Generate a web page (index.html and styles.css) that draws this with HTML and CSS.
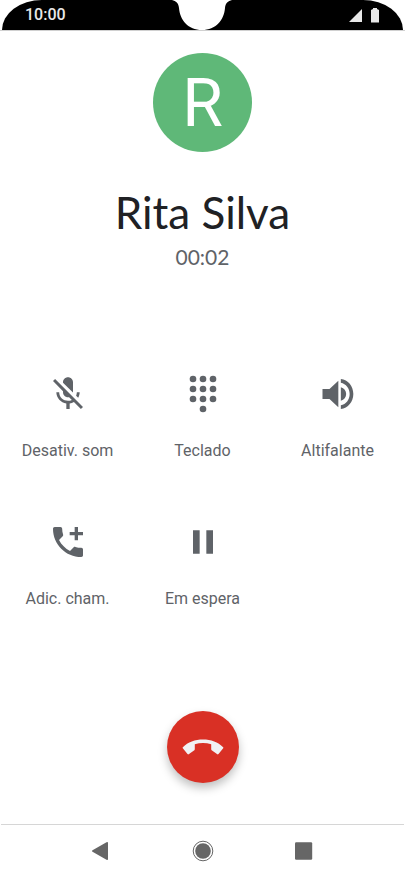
FILE: index.html
```html
<!DOCTYPE html>
<html lang="pt">
<head>
<meta charset="utf-8">
<meta name="viewport" content="width=device-width, initial-scale=1">
<title>Rita Silva</title>
<link rel="stylesheet" href="styles.css">
</head>
<body>
<div class="phone">
  <header class="status">
    <time class="clock">10:00</time>
    <svg class="notch" viewBox="0 0 60 30" aria-hidden="true"><path d="M0 0H60C56 1 53.500 3 53 8C52 20 44 30 30 30S8 20 7 8C6.500 3 4 1 0 0Z"/></svg>
    <div class="indicators">
      <svg width="13" height="16" viewBox="0 0 13 16" aria-hidden="true"><path d="M13 2V15H0Z"/></svg>
      <svg width="8" height="16" viewBox="0 0 8 16" aria-hidden="true"><path d="M2 2V1H6V2L8 3V15.500H0V3Z"/></svg>
    </div>
  </header>

  <main class="call">
    <div class="avatar">R</div>
    <h1 class="name">Rita Silva</h1>
    <p class="timer">00:02</p>

    <div class="actions">
      <button class="action" type="button">
        <svg class="icon" viewBox="0 0 24 24" aria-hidden="true"><path d="M19 11h-1.700c0 .74-.16 1.430-.43 2.050l1.230 1.230c.56-.98.9-2.090.9-3.280zm-4.020.17c0-.06.02-.11.02-.17V5c0-1.660-1.340-3-3-3S9 3.340 9 5v.18l5.980 5.990zM4.270 3L3 4.270l6.010 6.010V11c0 1.660 1.330 3 2.990 3 .22 0 .44-.03.65-.08l1.660 1.660c-.71.33-1.500.52-2.310.52-2.760 0-5.300-2.100-5.300-5.100H5c0 3.410 2.720 6.230 6 6.720V21h2v-3.280c.91-.13 1.770-.45 2.540-.9L19.730 21 21 19.730 4.270 3z"/></svg>
        <span>Desativ. som</span>
      </button>
      <button class="action" type="button">
        <svg class="icon" viewBox="0 0 24 24" aria-hidden="true"><circle cx="6" cy="3" r="2"/><circle cx="12" cy="3" r="2"/><circle cx="18" cy="3" r="2"/><circle cx="6" cy="9" r="2"/><circle cx="12" cy="9" r="2"/><circle cx="18" cy="9" r="2"/><circle cx="6" cy="15" r="2"/><circle cx="12" cy="15" r="2"/><circle cx="18" cy="15" r="2"/><circle cx="12" cy="21" r="2"/></svg>
        <span>Teclado</span>
      </button>
      <button class="action" type="button">
        <svg class="icon" viewBox="0 0 24 24" aria-hidden="true"><path d="M2.700 9v6h4.200l5.300 5V4L6.900 9zM13.700 8c2 .6 3.200 2.100 3.200 4s-1.200 3.400-3.200 4zM13.700 3c4.300.5 7.500 4.300 7.500 9s-3.200 8.500-7.500 9v-2.200c3.100-.6 5.300-3.400 5.300-6.800s-2.200-6.200-5.300-6.800z"/></svg>
        <span>Altifalante</span>
      </button>
      <button class="action" type="button">
        <svg class="icon" viewBox="0 0 24 24" aria-hidden="true"><path d="M20 15.500c-1.250 0-2.450-.2-3.570-.57-.35-.11-.74-.03-1.020.24l-2.200 2.200c-2.830-1.440-5.150-3.750-6.590-6.590l2.200-2.200c.28-.28.36-.67.25-1.020C8.700 6.450 8.500 5.250 8.500 4c0-.55-.45-1-1-1H4c-.55 0-1 .45-1 1 0 9.390 7.610 17 17 17 .55 0 1-.45 1-1v-3.500c0-.55-.45-1-1-1zM21 6h-3V3h-2v3h-3v2h3v3h2V8h3z"/></svg>
        <span>Adic. cham.</span>
      </button>
      <button class="action" type="button">
        <svg class="icon" viewBox="0 0 24 24" aria-hidden="true"><path d="M6 19h4V5H6zM14 5v14h4V5z"/></svg>
        <span>Em espera</span>
      </button>
    </div>

    <button class="hangup" type="button" aria-label="Desligar">
      <svg width="42" height="16" viewBox="0 0 42 16" aria-hidden="true"><path d="M.8 8.200C6 3 13 .5 21 .5S36 3 41.200 8.200Q41.600 8.800 41.200 9.300L36.500 15Q35.800 15.700 35 15.100L30 11.500Q29.200 11 29.200 10V5.200Q25 4 21 4T12.800 5.200V10Q12.800 11 12 11.500L7 15.100Q6.200 15.700 5.500 15L.8 9.300Q.4 8.800 .8 8.200Z"/></svg>
    </button>
  </main>

  <nav class="navbar">
    <button type="button" aria-label="Voltar"><svg width="22" height="22" viewBox="0 0 22 22" aria-hidden="true"><path d="M1.500 10.300 15.500 2.200Q17 1.500 17 3V19Q17 20.500 15.500 19.800L1.500 11.700Q.3 11 1.500 10.300Z"/></svg></button>
    <button type="button" aria-label="Início"><svg width="22" height="22" viewBox="0 0 22 22" aria-hidden="true"><circle class="ring" cx="11" cy="11" r="9.800"/><circle cx="11" cy="11" r="7.800"/></svg></button>
    <button type="button" aria-label="Recentes"><svg width="22" height="22" viewBox="0 0 22 22" aria-hidden="true"><rect x="2" y="2.300" width="17.200" height="17.500" rx="1.200"/></svg></button>
  </nav>
</div>
</body>
</html>
```
FILE: styles.css
```css
* { box-sizing: border-box; }

body {
  margin: 0;
  background: #fff;
  color: #5f6368;
  font-family: Roboto, "Liberation Sans", sans-serif;
}

button {
  margin: 0;
  padding: 0;
  border: 0;
  background: none;
  color: inherit;
  font: inherit;
}

svg { display: block; fill: currentColor; }

.phone {
  display: flex;
  flex-direction: column;
  min-height: 100vh;
}

.status {
  position: relative;
  display: flex;
  align-items: center;
  justify-content: space-between;
  height: 30px;
  margin: 0 2px;
  padding: 0 24px 0 23px;
  border-radius: 40px 40px 0 0 / 30px 30px 0 0;
  background: #000;
  color: #e8e8e8;
}

.clock {
  font-size: 16px;
  font-weight: 500;
  line-height: 32px;
}

.notch {
  position: absolute;
  top: 0;
  left: 50%;
  width: 60px;
  height: 30px;
  margin-left: -31px;
  fill: #fff;
}

.indicators { display: flex; gap: 9px; }

.call {
  flex: 1;
  display: flex;
  flex-direction: column;
  align-items: center;
  padding: 22px 0 41px;
  border-top: 1px solid #d0d0d0;
}

.avatar {
  width: 99px;
  height: 99px;
  border-radius: 50%;
  background: #5fb878;
  color: #fff;
  font-size: 66px;
  line-height: 102px;
  text-align: center;
}

.name {
  margin: 34px 0 0;
  color: #202124;
  font-family: Lato, Roboto, sans-serif;
  font-size: 44px;
  font-weight: 400;
  line-height: 52px;
}

.timer {
  margin: 7px 0 0;
  font-family: Lato, Roboto, sans-serif;
  font-size: 21px;
  line-height: 24px;
}

.actions {
  align-self: stretch;
  display: grid;
  grid-template-columns: repeat(3, 1fr);
  row-gap: 60px;
  margin-top: 105px;
}

.action {
  display: flex;
  flex-direction: column;
  align-items: center;
  gap: 26px;
  color: #5f6368;
  font-size: 16px;
  line-height: 22px;
}

.icon { width: 40px; height: 40px; }

.hangup {
  display: grid;
  place-items: center;
  width: 72px;
  height: 72px;
  margin-top: auto;
  border-radius: 50%;
  background: #d93025;
  box-shadow: 0 5px 10px rgba(0, 0, 0, 0.25);
  color: #f1f1f4;
}

.navbar {
  display: flex;
  justify-content: center;
  gap: 79px;
  margin: 0 1px;
  padding: 15px 0 16px;
  border-top: 1px solid #d6d6d6;
  color: #666;
}

.ring { fill: none; stroke: currentColor; stroke-width: 1; }
```
